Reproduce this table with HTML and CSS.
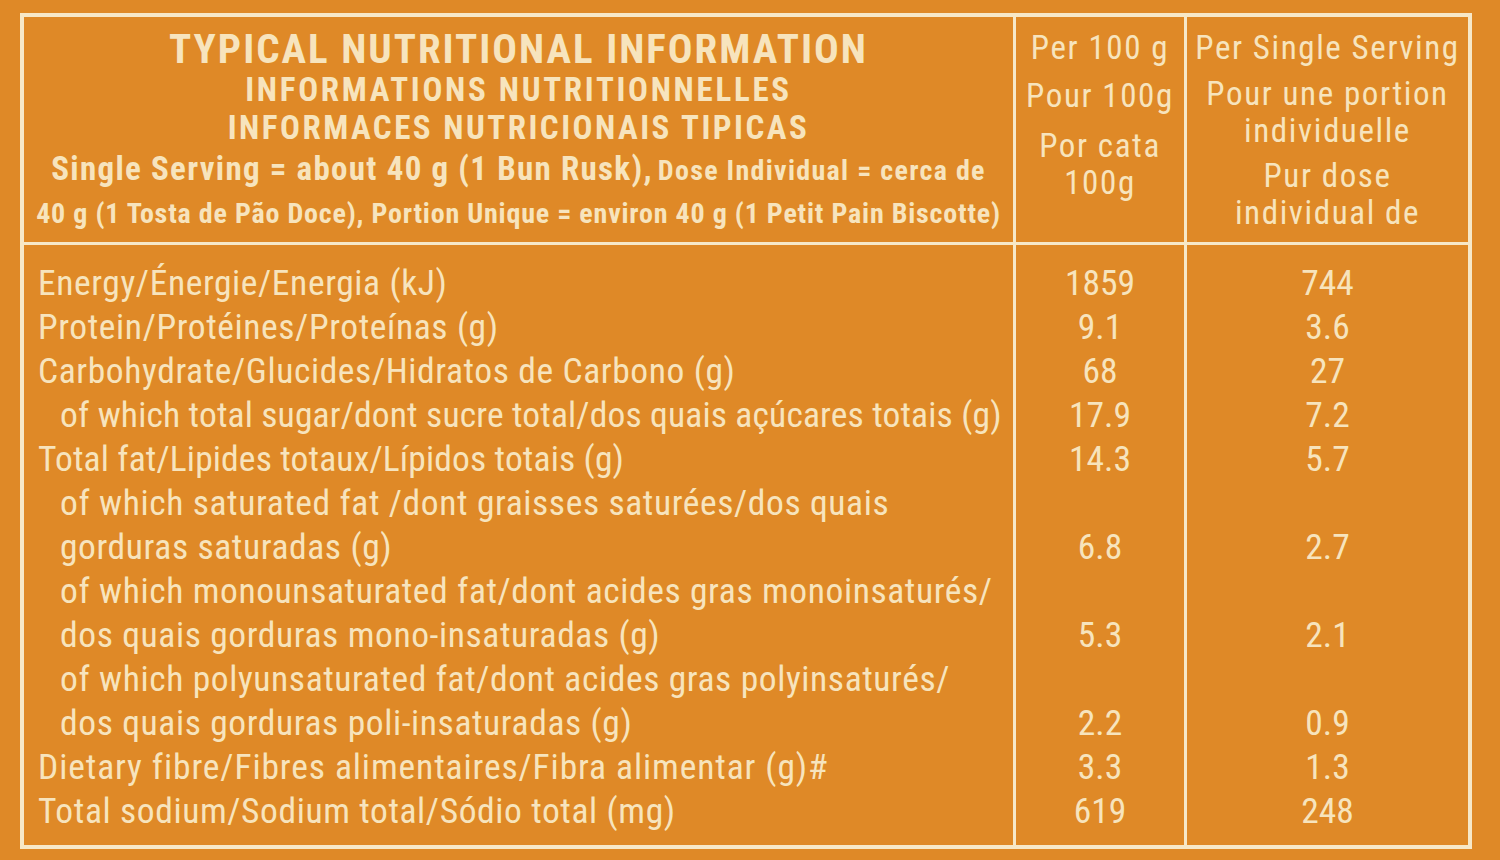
FILE: index.html
```html
<!DOCTYPE html>
<html lang="en">
<head>
<meta charset="utf-8">
<title>Typical Nutritional Information</title>
<link rel="stylesheet" href="styles.css">
</head>
<body>
<div class="label">
  <div class="head">
    <div class="head-title">
      <div class="t1">TYPICAL NUTRITIONAL INFORMATION</div>
      <div class="t2">INFORMATIONS NUTRITIONNELLES</div>
      <div class="t3">INFORMACES NUTRICIONAIS TIPICAS</div>
      <div class="t4"><span class="big">Single Serving = about 40 g (1 Bun Rusk),</span> <span class="small">Dose Individual = cerca de</span></div>
      <div class="t5">40 g (1 Tosta de Pão Doce), Portion Unique = environ 40 g (1 Petit Pain Biscotte)</div>
    </div>
    <div class="head-col per100">
      <div class="hb hb1">Per 100 g</div>
      <div class="hb hb2">Pour 100g</div>
      <div class="hb hb3">Por cata<br>100g</div>
    </div>
    <div class="head-col serving">
      <div class="hb sb1">Per Single Serving</div>
      <div class="hb sb2">Pour une portion<br>individuelle</div>
      <div class="hb sb3">Pur dose<br>individual de</div>
    </div>
  </div>
  <div class="body">
    <div class="row first"><div class="name">Energy/Énergie/Energia (kJ)</div><div class="v">1859</div><div class="v">744</div></div>
    <div class="row"><div class="name">Protein/Protéines/Proteínas (g)</div><div class="v">9.1</div><div class="v">3.6</div></div>
    <div class="row"><div class="name">Carbohydrate/Glucides/Hidratos de Carbono (g)</div><div class="v">68</div><div class="v">27</div></div>
    <div class="row"><div class="name sub tight">of which total sugar/dont sucre total/dos quais açúcares totais (g)</div><div class="v">17.9</div><div class="v">7.2</div></div>
    <div class="row"><div class="name tight">Total fat/Lipides totaux/Lípidos totais (g)</div><div class="v">14.3</div><div class="v">5.7</div></div>
    <div class="row"><div class="name sub">of which saturated fat /dont graisses saturées/dos quais<br>gorduras saturadas (g)</div><div class="v">6.8</div><div class="v">2.7</div></div>
    <div class="row"><div class="name sub">of which monounsaturated fat/dont acides gras monoinsaturés/<br>dos quais gorduras mono-insaturadas (g)</div><div class="v">5.3</div><div class="v">2.1</div></div>
    <div class="row"><div class="name sub">of which polyunsaturated fat/dont acides gras polyinsaturés/<br>dos quais gorduras poli-insaturadas (g)</div><div class="v">2.2</div><div class="v">0.9</div></div>
    <div class="row"><div class="name wide">Dietary fibre/Fibres alimentaires/Fibra alimentar (g)#</div><div class="v">3.3</div><div class="v">1.3</div></div>
    <div class="row last"><div class="name">Total sodium/Sodium total/Sódio total (mg)</div><div class="v">619</div><div class="v">248</div></div>
  </div>
</div>
</body>
</html>
```
FILE: styles.css
```css
html, body {
  margin: 0;
  padding: 0;
  background: #df8927;
}
body {
  width: 1500px;
  height: 860px;
  overflow: hidden;
  font-family: "Roboto Condensed", "Open Sans", sans-serif;
  color: #f7e4bd;
}
.label {
  margin: 13px 0 0 20px;
  width: 1444px;
  border: 4px solid #f7e8c8;
}
.head, .row {
  display: grid;
  grid-template-columns: 989px 171px 284px;
}
.head {
  height: 225px;
  border-bottom: 3px solid #f7e8c8;
}
.head-col, .row .v {
  border-left: 3px solid #f7e8c8;
}
.head-title {
  text-align: center;
  font-weight: 700;
  padding-top: 10px;
  white-space: nowrap;
}
.t1 { font-size: 41px; line-height: 44px; letter-spacing: 2px; }
.t2 { font-size: 33px; line-height: 38px; letter-spacing: 2.7px; }
.t3 { font-size: 33px; line-height: 38px; letter-spacing: 2.5px; }
.t4 { line-height: 44px; letter-spacing: 1.3px; }
.t4 .big { font-size: 33px; }
.t4 .small { font-size: 28px; }
.t5 { font-size: 28px; line-height: 34px; letter-spacing: 0.8px; }

.head-col {
  text-align: center;
  font-size: 33px;
  letter-spacing: 1.6px;
  white-space: nowrap;
}
.hb { line-height: 37px; }
.hb1, .sb1 { margin-top: 12px; }
.hb2 { margin-top: 11px; }
.hb3 { margin-top: 13px; }
.sb2 { margin-top: 9px; }
.sb3 { margin-top: 8px; }

.body {
  height: 600px;
  display: flex;
  flex-direction: column;
}
.row {
  font-size: 35.5px;
  line-height: 44px;
  letter-spacing: 0.6px;
}
.row .name {
  padding-left: 14px;
  white-space: nowrap;
}
.row .name.sub {
  padding-left: 36px;
}
.row .name.tight {
  letter-spacing: 0.15px;
}
.row .name.wide {
  letter-spacing: 0.9px;
}
.row .v {
  display: flex;
  align-items: flex-end;
  justify-content: center;
  letter-spacing: 0;
}
.row.first > div { padding-top: 16px; }
.row.last > div { padding-bottom: 15px; }
.body .row.last { flex: 1; }
```
